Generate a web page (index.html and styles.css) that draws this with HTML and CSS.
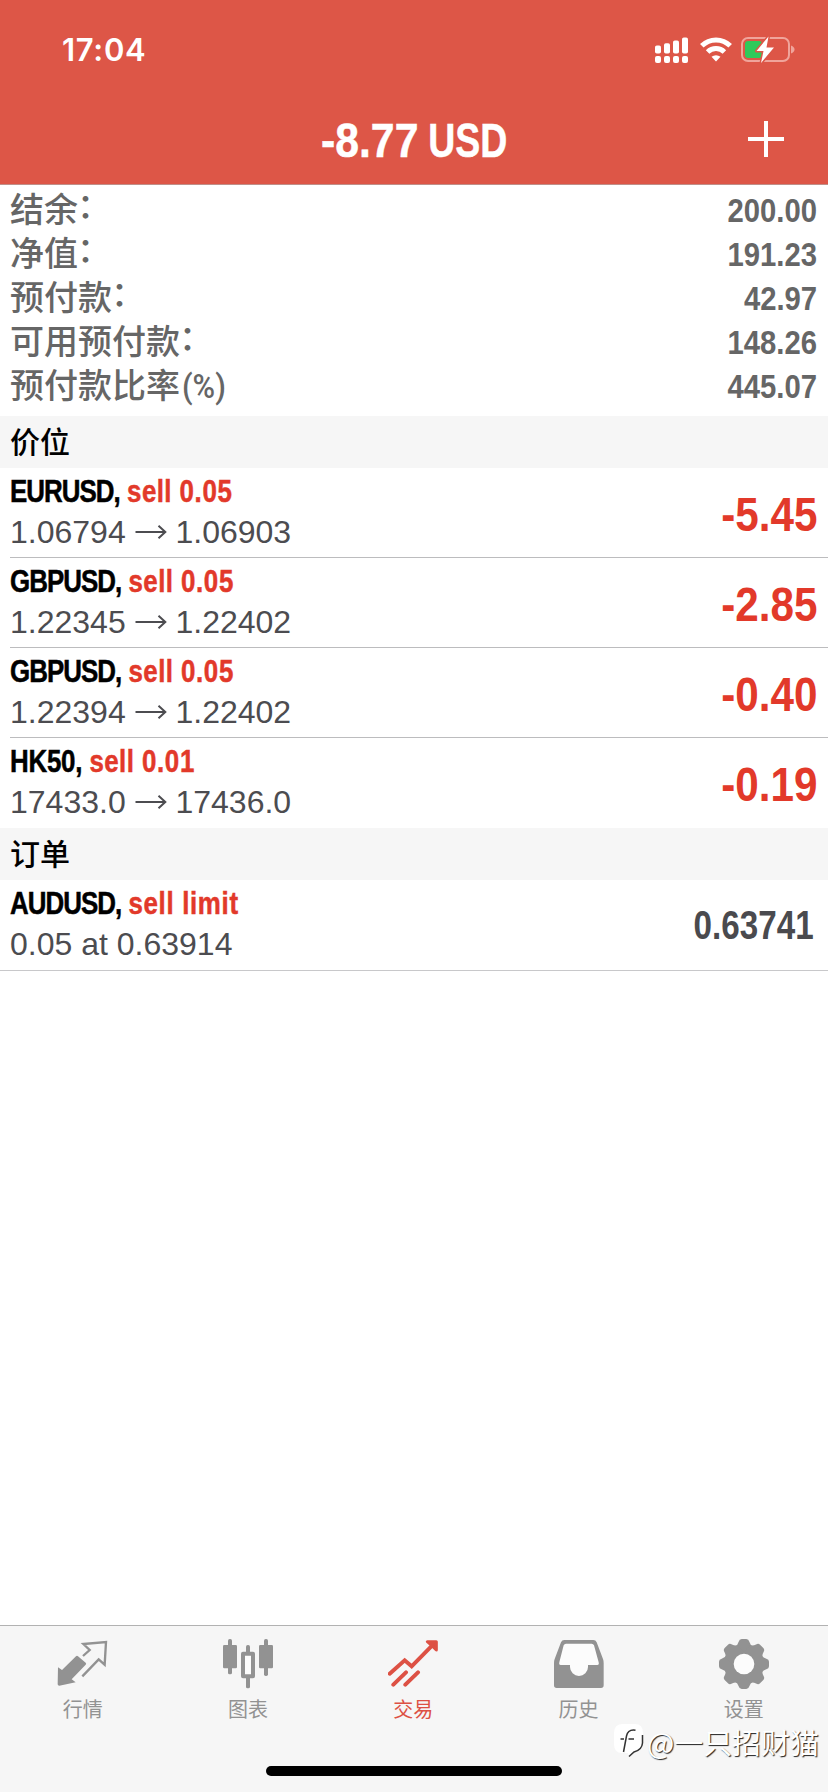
FILE: index.html
```html
<!DOCTYPE html>
<html lang="zh-CN">
<head>
<meta charset="utf-8">
<title>交易</title>
<link rel="stylesheet" href="styles.css">
</head>
<body>
<svg class="defs" width="0" height="0" aria-hidden="true">
  <symbol id="arrow" viewBox="0 0 32 16"><path d="M0.5 8H30M23.500 1.800L30.300 8L23.500 14.200" fill="none" stroke="currentColor" stroke-width="2"/></symbol>
</svg>
<div class="screen">
  <header class="header">
    <div class="status">
      <span class="time">17:04</span>
      <div class="status-icons">
        <svg class="signal" viewBox="0 0 33 26" fill="#fff">
          <rect x="0" y="8.500" width="6" height="8" rx="1.800"/><rect x="9" y="6.200" width="6" height="10.300" rx="1.800"/><rect x="18" y="3.500" width="6" height="13" rx="1.800"/><rect x="27" y="0.500" width="6" height="16" rx="1.800"/>
          <rect x="0" y="19" width="6" height="7" rx="2"/><rect x="9" y="19" width="6" height="7" rx="2"/><rect x="18" y="19" width="6" height="7" rx="2"/><rect x="27" y="19" width="6" height="7" rx="2"/>
        </svg>
        <svg class="wifi" viewBox="0 0 32 25">
          <path d="M1.800 8.800A20 20 0 0 1 30.200 8.800M7.600 15A12 12 0 0 1 24.400 15" fill="none" stroke="#fff" stroke-width="5"/>
          <path d="M11.500 19.800A7 7 0 0 1 20.500 19.800L16 24.500Z" fill="#fff"/>
        </svg>
        <svg class="battery" viewBox="0 0 54 28">
          <rect x="1" y="2" width="47" height="23" rx="6" fill="none" stroke="#f0a49b" stroke-width="2"/>
          <path d="M50 9.500Q53.500 11 53.500 13.500Q53.500 16 50 17.500Z" fill="#f0a49b"/>
          <rect x="4" y="5" width="17" height="17" rx="3" fill="#30c95a"/>
          <path d="M27.500 0.500L15.500 15H22.500L20 27L33 11.500H25.500Z" fill="#fff" stroke="#dd5647" stroke-width="3" stroke-linejoin="round" paint-order="stroke"/>
        </svg>
      </div>
    </div>
    <div class="navbar">
      <h1 class="title"><span class="total">-8.77</span> <span class="currency">USD</span></h1>
      <svg class="plus" viewBox="0 0 36 36"><path d="M18 0V36M0 18H36" stroke="#fff" stroke-width="4"/></svg>
    </div>
  </header>

  <main class="content">
    <dl class="summary">
      <div class="sum-row"><dt>结余<span class="colon">：</span></dt><dd>200.00</dd></div>
      <div class="sum-row"><dt>净值<span class="colon">：</span></dt><dd>191.23</dd></div>
      <div class="sum-row"><dt>预付款<span class="colon">：</span></dt><dd>42.97</dd></div>
      <div class="sum-row"><dt>可用预付款<span class="colon">：</span></dt><dd>148.26</dd></div>
      <div class="sum-row"><dt>预付款比率<span class="pct">(%)</span></dt><dd>445.07</dd></div>
    </dl>

    <h2 class="section">价位</h2>
    <ul class="list">
      <li class="item"><div class="info"><div class="name"><span class="sym">EURUSD,</span> <span class="side">sell <span class="num">0.05</span></span></div><div class="price">1.06794 <svg class="arrow"><use href="#arrow"/></svg> 1.06903</div></div><div class="profit">-5.45</div></li>
      <li class="item"><div class="info"><div class="name"><span class="sym">GBPUSD,</span> <span class="side">sell <span class="num">0.05</span></span></div><div class="price">1.22345 <svg class="arrow"><use href="#arrow"/></svg> 1.22402</div></div><div class="profit">-2.85</div></li>
      <li class="item"><div class="info"><div class="name"><span class="sym">GBPUSD,</span> <span class="side">sell <span class="num">0.05</span></span></div><div class="price">1.22394 <svg class="arrow"><use href="#arrow"/></svg> 1.22402</div></div><div class="profit">-0.40</div></li>
      <li class="item"><div class="info"><div class="name"><span class="sym hk">HK50,</span> <span class="side">sell <span class="num">0.01</span></span></div><div class="price">17433.0 <svg class="arrow"><use href="#arrow"/></svg> 17436.0</div></div><div class="profit">-0.19</div></li>
    </ul>

    <h2 class="section">订单</h2>
    <ul class="list orders">
      <li class="item"><div class="info"><div class="name"><span class="sym">AUDUSD,</span> <span class="side limit">sell limit</span></div><div class="price">0.05 at 0.63914</div></div><div class="quote">0.63741</div></li>
    </ul>
  </main>

  <footer class="footer">
    <nav class="tabs">
      <a class="tab">
        <svg class="tab-icon" viewBox="2 0 150 150"><path d="M2 85L14 93L56 52Q59 49 62 52L85 71Q88 74 85 77L43 121L55 130L6 140Q1 140 1 136Z" fill="#929292"/><path d="M77 51L97 33L78 15L146 9L142 77L124 61L75 112" fill="none" stroke="#929292" stroke-width="7"/></svg>
        <span>行情</span>
      </a>
      <a class="tab">
        <svg class="tab-icon" viewBox="0 0 150 150"><g fill="#929292"><rect x="0" y="18" width="42" height="70" rx="4"/><rect x="15" y="0" width="12" height="106" rx="5"/><rect x="108" y="18" width="42" height="70" rx="4"/><rect x="123" y="0" width="12" height="111" rx="5"/><rect x="69" y="18" width="12" height="130" rx="5"/></g><rect x="60" y="44" width="30" height="68" fill="#fcfcfc" stroke="#929292" stroke-width="12" stroke-linejoin="round"/></svg>
        <span>图表</span>
      </a>
      <a class="tab active">
        <svg class="tab-icon" viewBox="0 0 150 150"><path d="M5 104L50 64L71 82L138 14M16 137L54 100M52 137L90 100" fill="none" stroke="#dd5144" stroke-width="12" stroke-linecap="round" stroke-linejoin="miter"/><path d="M118 8H145V33L132 20Z" fill="#dd5144" stroke="#dd5144" stroke-width="9" stroke-linejoin="round"/></svg>
        <span>交易</span>
      </a>
      <a class="tab">
        <svg class="tab-icon" viewBox="0 0 150 150"><path d="M31 3H118Q125 3 128 10L147 60Q149 65 149 72V139Q149 147 141 147H8Q0 147 0 139V72Q0 65 2 60L21 10Q24 3 31 3Z" fill="#929292"/><path d="M36 14H113Q118 14 120 19L134 70Q136 78 130 78H102V84A27 27 0 0 1 48 84V78H20Q14 78 16 70L29 19Q31 14 36 14Z" fill="#fcfcfc"/></svg>
        <span>历史</span>
      </a>
      <a class="tab">
        <svg class="tab-icon" viewBox="0 0 150 150"><g fill="#929292"><circle cx="75" cy="75" r="58"/>
          <path id="teeth" d="M48 22Q56 19 59 8Q61 0 68 0H82Q89 0 91 8Q94 19 102 22V128Q94 131 91 142Q89 150 82 150H68Q61 150 59 142Q56 131 48 128Z"/>
          <use href="#teeth" transform="rotate(45 75 75)"/><use href="#teeth" transform="rotate(90 75 75)"/><use href="#teeth" transform="rotate(135 75 75)"/></g><circle cx="75" cy="75" r="31" fill="#fcfcfc"/></svg>
        <span>设置</span>
      </a>
    </nav>
    <div class="home-bar"></div>
  </footer>

  <div class="watermark">
    <svg class="wm-logo" viewBox="0 0 30 34"><path d="M9 0H21Q29 0 29 9V19Q29 27 20 28L15 33L14 29H8Q0 29 0 20V9Q0 0 9 0Z" fill="#fff"/><path d="M6.500 15H10M14.500 15H20M9.500 28L12.500 12Q14 5 21.500 6.200M28.500 11V19Q28 26 20 28L15 32.500" fill="none" stroke="#333" stroke-width="1.500"/></svg>
    <span>@一只招财猫</span>
  </div>
</div>
</body>
</html>
```

FILE: styles.css
```css
* { box-sizing: border-box; margin: 0; padding: 0; }
body { background: #fff; font-family: "Liberation Sans", "Noto Sans CJK SC", sans-serif; }
.defs { position: absolute; }
.screen { position: relative; display: flex; flex-direction: column; width: 828px; height: 1792px; overflow: hidden; background: #fff; }

.header { height: 185px; background: #dd5647; color: #fff; border-bottom: 1px solid #c08f89; }
.status { display: flex; justify-content: space-between; height: 98px; padding: 0 33px 0 62px; }
.time { font: 600 31px/38px Inter, sans-serif; letter-spacing: 0.7px; margin-top: 31px; }
.status-icons { display: flex; align-items: flex-start; }
.signal { width: 33px; height: 26px; margin-top: 37px; }
.wifi { width: 32px; height: 25px; margin: 37px 0 0 12px; }
.battery { width: 54px; height: 28px; margin: 36px 0 0 9px; }
.navbar { display: grid; grid-template-columns: 80px 1fr 80px; height: 86px; }
.title { grid-column: 2; display: flex; justify-content: center; gap: 10px; font-size: 48px; line-height: 86px; -webkit-text-stroke: .5px; }
.total { margin: 0 -6px; transform: scaleX(.89); }
.currency { margin: 0 -11px; transform: scaleX(.78); }
.plus { width: 36px; height: 36px; margin-top: 23px; }

.content { flex: 1; }
.summary { height: 231px; padding: 3px 11px 0 10px; color: #666; }
.sum-row { display: flex; justify-content: space-between; height: 44px; line-height: 44px; font-size: 34px; }
.sum-row dt { font-weight: 500; line-height: 45px; }
.colon { display: inline-block; margin-left: -1px; transform: translateY(-4px); }
.pct { display: inline-block; margin-left: 2px; font: 500 34px/42px Roboto, sans-serif; transform: scaleX(.9); transform-origin: left; }
.sum-row dd { font-weight: bold; transform: scaleX(.86); transform-origin: right; }

.section { height: 52px; padding-left: 10px; background: #f6f6f6; font: 500 30px/49px "Noto Sans CJK SC", sans-serif; color: #000; }
.list { list-style: none; }
.item { display: flex; justify-content: space-between; align-items: center; height: 90px; margin-left: 10px; padding-right: 11px; border-bottom: 1px solid #bcbcbe; }
.list:not(.orders) .item:last-child { border-bottom-color: transparent; }
.orders .item { height: 91px; margin-left: 0; padding-left: 10px; border-color: #c8c8ca; }
.info { align-self: flex-start; white-space: nowrap; }
.name { height: 43px; font-weight: bold; font-size: 32px; line-height: 46px; transform: scaleX(.81); transform-origin: left; -webkit-text-stroke: .5px; }
.sym { letter-spacing: -1.2px; color: #000; }
.hk { letter-spacing: -.3px; }
.side { color: #e2392a; letter-spacing: .5px; }
.limit { letter-spacing: .8px; }
.num { letter-spacing: .8px; }
.price { font-size: 32px; line-height: 42px; color: #4c4c50; }
.arrow { width: 32px; height: 16px; vertical-align: 3px; }
.profit { font-size: 48px; font-weight: bold; color: #e2392a; transform: scaleX(.88); transform-origin: right; margin-top: 4px; }
.quote { margin-right: 3px; font-size: 40px; font-weight: bold; color: #4a4a4e; transform: scaleX(.83); transform-origin: right; }

.footer { display: flex; flex-direction: column; align-items: center; height: 167px; background: #f6f6f6; border-top: 1px solid #b2b2b2; }
.tabs { display: flex; width: 100%; height: 140px; padding: 13px 1.500px 0 0; }
.tab { flex: 1; display: flex; flex-direction: column; align-items: center; color: #929292; font: 400 20px/30px "Noto Sans CJK SC", sans-serif; }
.tab:first-child .tab-icon { overflow: visible; }
.tab-icon { width: 50px; height: 50px; margin-bottom: 5px; }
.active { color: #dd5144; }
.home-bar { width: 296px; height: 10px; border-radius: 5px; background: #000; }

.watermark { position: absolute; left: 614px; top: 1721px; display: flex; align-items: center; color: #fff; font: 400 28.900px/40px "Noto Sans CJK SC", sans-serif; text-shadow: 1px 1px 1px #222; }
.wm-logo { width: 30px; height: 34px; margin-right: 3px; }
```
